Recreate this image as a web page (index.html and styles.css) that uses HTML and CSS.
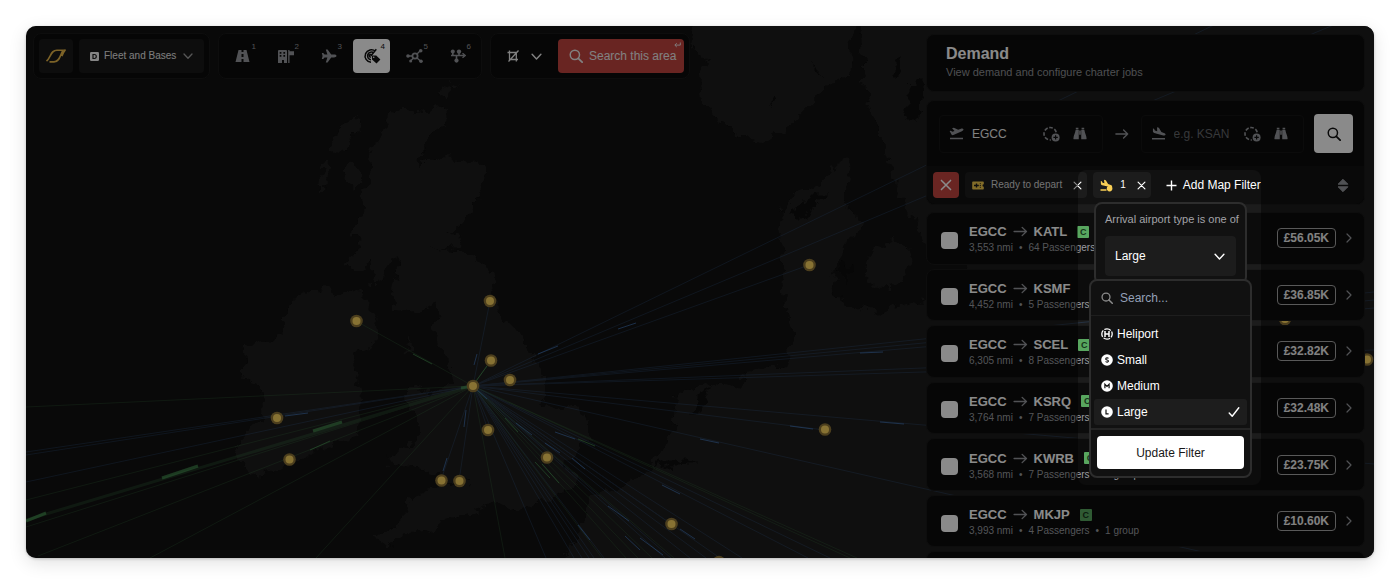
FILE: index.html
```html
<!DOCTYPE html>
<html lang="en">
<head>
<meta charset="utf-8">
<title>Demand</title>
<link rel="stylesheet" href="styles.css">
</head>
<body>
<svg class="symbols" aria-hidden="true">
  <symbol id="search" viewBox="0 0 16 16"><circle cx="6.7" cy="6.7" r="5.3" fill="none" stroke="currentColor" stroke-width="1.7"/><path d="M10.6 10.6 15 15" stroke="currentColor" stroke-width="2" stroke-linecap="round"/></symbol>
  <symbol id="down" viewBox="0 0 10 10"><path d="m1 3 4 4.2L9 3" fill="none" stroke="currentColor" stroke-width="1.3" stroke-linecap="round" stroke-linejoin="round"/></symbol>
  <symbol id="right" viewBox="0 0 10 10"><path d="m3 1 4 4-4 4" fill="none" stroke="currentColor" stroke-width="1.2" stroke-linecap="round" stroke-linejoin="round"/></symbol>
  <symbol id="close" viewBox="0 0 10 10"><path d="m1.2 1.2 7.6 7.6M8.8 1.2 1.2 8.8" stroke="currentColor" stroke-width="1.3" stroke-linecap="round"/></symbol>
  <symbol id="arrow" viewBox="0 0 16 12"><path d="M1 6h13.5M9.8 1.5 14.5 6l-4.7 4.5" fill="none" stroke="currentColor" stroke-width="1.5" stroke-linecap="round" stroke-linejoin="round"/></symbol>
  <symbol id="binoculars" viewBox="0 0 16 14"><path fill="currentColor" d="M3.2.5h3v2h-3zM9.8.5h3v2h-3zM3 3h3.600v10.500H1.200C.6 13.500.4 13 .5 12.300.8 9 2.400 6.500 3 3ZM13 3H9.400v10.500h5.400c.6 0 .8-.5.7-1.200C15.200 9 13.600 6.500 13 3ZM7.100 3.500h1.800v5H7.100z"/></symbol>
  <symbol id="radius" viewBox="0 0 18 16"><path d="M14.200 6.200A6.200 6.200 0 1 0 8.800 13.900" fill="none" stroke="currentColor" stroke-width="1.600" stroke-dasharray="3.600 1.700"/><circle cx="13.600" cy="11.400" r="4" fill="currentColor"/><path d="M13.600 9.200v4.400M11.400 11.400h4.400" stroke="#0d0d0d" stroke-width="1.200"/></symbol>
  <symbol id="depart" viewBox="0 0 16 14"><path fill="currentColor" d="M1 11.500h14v1.800H1zM.6 4.400l1.300-.4 1.700 1.200 2.300-.8L3.200 1.400 5.200.8l4.600 2.200 3-1.100c1.200-.4 2.500-.2 2.700.6.2.8-.6 1.600-1.700 2L4.600 8.700c-.8.3-1.500.2-2-.5z"/></symbol>
  <symbol id="arrive" viewBox="0 0 16 14"><path fill="currentColor" d="M1 11.800h14v1.700H1zM2 1.500l1.200.4.900 1.900 2.500.8L6.400.3 8.400.8l2.700 4.600 2.700 1c1.200.4 2 1.200 1.800 2-.2.8-1.300 1-2.500.7L3.400 6.400C2.400 6.100 2 5.500 2 4.700z"/></symbol>
</svg>

<main class="window">
  <svg class="map" viewBox="26 26 1348 532" preserveAspectRatio="xMidYMid slice" aria-hidden="true">
    <defs>
      <filter id="coast" x="0" y="0" width="100%" height="100%"><feTurbulence type="fractalNoise" baseFrequency=".09" numOctaves="3" seed="4"/><feDisplacementMap in="SourceGraphic" scale="16" xChannelSelector="R" yChannelSelector="G"/></filter>
    </defs>
    <g filter="url(#coast)">
      <path class="land" d="M392 109 410 112 449 107 448 121 430 134 424 152 416 166 440 158 480 160 487 172 478 195 473 210 460 224 448 233 463 237 455 247 430 250 460 251 480 258 490 272 494 295 500 318 517 330 530 350 545 375 547 395 540 405 552 408 575 405 588 420 588 435 578 450 562 465 578 475 577 485 560 495 535 503 510 509 490 505 470 513 440 520 434 533 415 528 400 540 385 545 375 540 398 523 405 515 410 498 430 488 450 480 470 485 462 478 445 478 425 470 405 462 388 468 390 455 415 440 420 425 405 400 410 385 430 392 450 385 452 365 440 345 433 325 440 305 420 312 395 310 392 295 400 275 398 255 388 260 380 285 372 285 375 262 355 270 350 265 362 240 352 232 365 215 360 195 372 180 370 155 385 125Z"/>
      <path class="land" d="M357 115 355 135 342 152 330 150 334 133ZM320 165 328 162 325 190 321 190ZM343 172 353 160 360 180 354 190ZM345 265 360 248 357 270ZM405 352 411 337 412 348ZM440 90 448 86 447 98ZM448 82 460 84 450 88ZM325 287 335 295 355 290 366 300 372 312 380 335 370 348 350 352 355 370 362 400 358 435 330 445 300 460 275 470 250 475 235 450 250 430 262 420 265 400 260 385 243 380 245 360 243 345 270 340 285 330 282 320 292 302 305 295Z"/>
      <path class="land" d="M690 10 692 50 710 62 700 75 703 100 725 125 745 140 763 142 790 125 820 95 848 75 852 30 860 22 866 90 875 120 885 150 897 190 910 215 922 235 928 260 1400 260 1400 10Z"/>
      <path class="land" d="M850 158 851 175 843 205 861 222 856 240 845 242 838 265 830 290 850 305 880 312 935 296 1000 240 1400 240V590H540L578 540 582 515 590 500 625 485 645 472 665 450 675 425 678 395 705 382 740 388 745 372 785 366 795 340 785 300 780 240 782 210 795 192 820 187 832 167ZM870 250 895 240 912 255 905 285 880 290 865 275Z"/>
      <path class="water" d="M795 208 812 196 830 194 812 204 808 222 790 214ZM700 392 712 384 702 412 690 414ZM650 468 672 458 700 462 670 466ZM910 85 925 78 920 118 906 122ZM892 60 902 58 896 82ZM770 93 775 98 771 108ZM813 65 822 76 815 72ZM840 268 852 260 848 285Z"/>
    </g>
    <g class="route blue">
      <path d="M473 386 1374-53M473 386 1374 8M473 386 809 265M473 386 1374 292M473 386 1374 300M473 386 1374 308M473 386 1374 350M473 386 1374 358M473 386 1374 464M473 386 825 430M473 386 1374 591M473 386 490 301M473 386 441 480M473 386 459 481M473 386 488 430M473 386 26 452M473 386 26 455M473 386 26 482"/>
      <path d="M473 386 830 558M473 386 808 558M473 386 742 558M473 386 720 558M473 386 706 558M473 386 690 558M473 386 671 558M473 386 604 558M473 386 594 558M473 386 589 558M473 386 574 558M473 386 546 558M473 386 671 524M473 386 547 457M473 386 665 558M473 386 582 558"/>
    </g>
    <g class="route green">
      <path d="M473 386 356 321M473 386 491 360M473 386 26 407M473 386 26 500M473 386 26 527M473 386 38 556M473 386 150 558M473 386 316 558M473 386 505 558M473 386 850 558M473 386 857 558M473 386 674 558M473 386 652 558M473 386 638 558M473 386 626 558M473 386 602 558"/>
      <path class="wide" d="M473 386 26 520"/>
    </g>
    <g class="pulse blue">
      <path d="M538 354 558 346M618 329 636 323M474 365 477 354M464 427 466 410M443 471 447 458M285 416 308 413M860 353 883 352M880 422 904 424M790 426 813 429M700 439 719 443M516 423 532 435M545 443 560 453M555 432 575 439M572 458 585 469M608 506 629 521M662 485 680 494M680 529 695 539M625 536 640 550M578 525 590 540M640 538 663 555M476 389 487 399"/>
    </g>
    <g class="pulse green">
      <path d="M413 354 432 364M476 381 487 366M578 439 595 446M535 462 550 478M542 464 559 483M505 418 518 432M310 450 330 441"/>
      <path class="wide" d="M313 431 342 422M162 478 198 466M26 521 46 513M461 388 473 386"/>
    </g>
    <g class="pin-ring"><circle cx="356.500" cy="321" r="6.300"/><circle cx="490" cy="301" r="6.300"/><circle cx="491" cy="360.500" r="6.300"/><circle cx="510" cy="380" r="6.300"/><circle cx="473" cy="386" r="6.300"/><circle cx="277" cy="418" r="6.300"/><circle cx="289.500" cy="459.500" r="6.300"/><circle cx="441.500" cy="480.500" r="6.300"/><circle cx="459.500" cy="481" r="6.300"/><circle cx="488" cy="430" r="6.300"/><circle cx="547" cy="457.500" r="6.300"/><circle cx="671.500" cy="524" r="6.300"/><circle cx="825" cy="429.500" r="6.300"/><circle cx="809.500" cy="265" r="6.300"/><circle cx="719" cy="562" r="6.300"/><circle cx="1285" cy="319" r="6.300"/><circle cx="1367" cy="359.500" r="6.300"/></g>
    <g class="pin"><circle cx="356.500" cy="321" r="4"/><circle cx="490" cy="301" r="4"/><circle cx="491" cy="360.500" r="4"/><circle cx="510" cy="380" r="4"/><circle cx="473" cy="386" r="4"/><circle cx="277" cy="418" r="4"/><circle cx="289.500" cy="459.500" r="4"/><circle cx="441.500" cy="480.500" r="4"/><circle cx="459.500" cy="481" r="4"/><circle cx="488" cy="430" r="4"/><circle cx="547" cy="457.500" r="4"/><circle cx="671.500" cy="524" r="4"/><circle cx="825" cy="429.500" r="4"/><circle cx="809.500" cy="265" r="4"/><circle cx="1285" cy="319" r="4"/><circle cx="1367" cy="359.500" r="4"/></g>
  </svg>

  <div class="layout">
    <nav class="toolbar" aria-label="Map tools">
      <div class="card tools">
        <button class="tool logo" aria-label="Home"><svg width="22" height="16" viewBox="0 0 22 16"><path d="M1.500 13.200C6 9.500 5.500 2.200 12 2.200h6C15.500 6 15 13.900 9 13.900H4.500M20.500 1.600c-1.600 2-2.600 4.200-3.700 6.600" fill="none" stroke="currentColor" stroke-width="1.600"/></svg></button>
        <label class="view-select">
          <svg width="9" height="9" viewBox="0 0 9 9"><rect width="9" height="9" rx="1.200" fill="#f5f5f5"/><path d="M3 2.500h1.400C5.700 2.500 6.300 3.300 6.300 4.500S5.700 6.500 4.400 6.500H3z" fill="none" stroke="#1c1c1c" stroke-width="1.200"/></svg>
          <select aria-label="View"><option>Fleet and Bases</option></select>
          <svg class="soft" width="10" height="10"><use href="#down"/></svg>
        </label>
      </div>
      <div class="card tools">
        <button class="tool mode" aria-label="Routes"><svg width="15" height="14" viewBox="0 0 15 14"><path fill="currentColor" fill-rule="evenodd" d="M3.500 1h3v2h2V1h3l3 12H8.500v-3h-2v3H.500zM6.500 5v3h2V5z"/></svg><sup>1</sup></button>
        <button class="tool mode" aria-label="Bases"><svg width="18" height="15" viewBox="0 0 18 15"><path fill="currentColor" fill-rule="evenodd" d="M2 1h7a1 1 0 0 1 1 1v12H7v-3H5v3H1V2a1 1 0 0 1 1-1Zm.700 2v1.700h1.700V3Zm3.700 0v1.700h1.700V3ZM2.700 6v1.700h1.700V6Zm3.700 0v1.700h1.700V6ZM11.200 1h1.300v1.200H17v4h-4.500V14h-1.300z"/></svg><sup>2</sup></button>
        <button class="tool mode" aria-label="Aircraft"><svg width="16" height="14" viewBox="0 0 16 14"><path fill="currentColor" d="M15.500 7c0 .900-1.300 1.400-2.500 1.400h-2.800L6.600 13.500H4.800l1.600-5.100H3.600l-1.400 1.700H.800L1.600 7 .8 3.900h1.400l1.400 1.700h2.800L4.800.5h1.800l3.600 5.100H13c1.200 0 2.500.5 2.500 1.400Z"/></svg><sup>3</sup></button>
        <button class="tool mode active" aria-label="Demand" aria-pressed="true"><svg width="18" height="16" viewBox="0 0 18 16"><g fill="none" stroke="currentColor" stroke-width="1.500"><path d="M12.500 3.200A6.300 6.300 0 1 0 8 14.300M11 5.200A3.800 3.800 0 1 0 8 11.700M13.300 1.200 7.800 8M8.800 7.300A1.300 1.300 0 1 0 8 9"/></g><path fill="currentColor" d="M9 7.500h4.200l4.200 4.100-3.900 4L9 11.600z"/><circle cx="10.700" cy="9.200" r=".8" fill="#fff"/></svg><sup>4</sup></button>
        <button class="tool mode" aria-label="Network"><svg width="18" height="16" viewBox="0 0 18 16"><path d="M2 8h4.500M11 6l3-3M11 10l3.500 3M5 12.500 7.500 10" stroke="currentColor" stroke-width="1.400"/><circle cx="9" cy="8" r="2.600" fill="none" stroke="currentColor" stroke-width="1.800"/><g fill="currentColor"><circle cx="2" cy="8" r="1.800"/><circle cx="14.700" cy="2.800" r="1.800"/><circle cx="15" cy="13.200" r="1.800"/><circle cx="4.700" cy="13" r="1.500"/></g></svg><sup>5</sup></button>
        <button class="tool mode" aria-label="Connections"><svg width="16" height="14" viewBox="0 0 16 14"><path d="M1 6.500h13M2.800 2.500v4M9 2.500v4M6.500 7v5" stroke="currentColor" stroke-width="1.600"/><path d="m12.500 4.300 2.700 2.200-2.700 2.200" fill="none" stroke="currentColor" stroke-width="1.400"/><g fill="currentColor"><circle cx="2.800" cy="2.600" r="2"/><circle cx="9" cy="2.600" r="2.200"/><circle cx="6.500" cy="11.600" r="2.100"/></g></svg><sup>6</sup></button>
      </div>
      <div class="card tools area-tools">
        <button class="plain" aria-label="Crop area"><svg width="12" height="12" viewBox="0 0 12 12"><path d="M2.500.5v9H11M.5 2.500h8.800v9M1.500 11.500l10-11" fill="none" stroke="currentColor" stroke-width="1.300"/></svg></button>
        <button class="plain" aria-label="Area options"><svg width="11" height="11"><use href="#down"/></svg></button>
        <button class="search-area"><svg width="14" height="14"><use href="#search"/></svg>Search this area<svg class="enter" width="7" height="6" viewBox="0 0 7 6"><path d="M6.300.5v2.600H1M2.800 1.200.8 3.100l2 1.900" fill="none" stroke="currentColor" stroke-width=".9"/></svg></button>
      </div>
    </nav>

    <aside class="panel">
      <header class="card heading"><h1>Demand</h1><p>View demand and configure charter jobs</p></header>
      <section class="card finder" aria-label="Find jobs">
        <form class="route-form">
          <div class="field"><svg width="15" height="13"><use href="#depart"/></svg><input aria-label="From" value="EGCC"><button type="button" class="plain" aria-label="Search radius"><svg width="18" height="16"><use href="#radius"/></svg></button><button type="button" class="plain" aria-label="Find departure"><svg width="14" height="13"><use href="#binoculars"/></svg></button></div>
          <svg class="muted between" width="14" height="12"><use href="#arrow"/></svg>
          <div class="field"><svg width="15" height="13"><use href="#arrive"/></svg><input aria-label="To" placeholder="e.g. KSAN"><button type="button" class="plain" aria-label="Search radius"><svg width="18" height="16"><use href="#radius"/></svg></button><button type="button" class="plain" aria-label="Find arrival"><svg width="14" height="13"><use href="#binoculars"/></svg></button></div>
          <button type="button" class="go" aria-label="Search"><svg width="14" height="14"><use href="#search"/></svg></button>
        </form>
        <div class="filters">
          <button class="clear" aria-label="Clear filters"><svg width="12" height="12"><use href="#close"/></svg></button>
          <div class="chip"><svg width="12" height="9" viewBox="0 0 12 9"><path fill="#f2c94c" d="M1 .5h10a.800.800 0 0 1 .8.8v1.900a1.300 1.300 0 0 0 0 2.600v1.900a.800.800 0 0 1-.8.800H1a.800.800 0 0 1-.8-.8V1.300A.800.800 0 0 1 1 .500Z"/><path d="M2 4.500h4.800M4.500 2.500v4" stroke="#1c1c1c" stroke-width="1.400"/><path d="M8.300 2.200v4.600" stroke="#1c1c1c" stroke-dasharray="1 .8"/></svg><span>Ready to depart</span><button class="plain" aria-label="Remove ready to depart"><svg width="9" height="9"><use href="#close"/></svg></button></div>
          <div class="chip short"><svg width="13" height="13" viewBox="0 0 13 13"><path fill="#f9cf55" d="M.5 10.200h6v1.600H.5zM.8 2l1 .2.8 1.600 1.800.5L4 .8l1.800.4 2.300 3.900 2.600.8c1 .3 1.700 1 1.500 1.600-.1.600-1 .8-2.100.6L2.200 6.200C1.200 5.900.9 5.300.9 4.700z"/><circle cx="9.600" cy="9.600" r="2.800" fill="#f9cf55"/></svg><span>1</span><button class="plain" aria-label="Remove arrival filter"><svg width="9" height="9"><use href="#close"/></svg></button></div>
          <button class="plain add"><svg width="11" height="11" viewBox="0 0 11 11"><path d="M5.500.5v10M.5 5.500h10" stroke="currentColor" stroke-width="1.400"/></svg>Add Map Filter</button>
          <button class="plain sort" aria-label="Sort"><svg width="12" height="15" viewBox="0 0 12 15"><path fill="currentColor" stroke="currentColor" stroke-linejoin="round" d="M6 1.300 10.900 6.200H1.100zM6 13.700 10.900 8.800H1.100z"/></svg></button>
        </div>
      </section>
      <ul class="jobs">
        <li class="card job"><input type="checkbox" aria-label="Select EGCC to KATL"><div class="trip"><strong>EGCC <svg width="15" height="11"><use href="#arrow"/></svg> KATL <b class="tag">C</b></strong><p><span>3,553 nmi</span><i>•</i><span>64 Passengers</span></p></div><span class="price">£56.05K</span><svg class="muted" width="10" height="10"><use href="#right"/></svg></li>
        <li class="card job"><input type="checkbox" aria-label="Select EGCC to KSMF"><div class="trip"><strong>EGCC <svg width="15" height="11"><use href="#arrow"/></svg> KSMF</strong><p><span>4,452 nmi</span><i>•</i><span>5 Passengers</span></p></div><span class="price">£36.85K</span><svg class="muted" width="10" height="10"><use href="#right"/></svg></li>
        <li class="card job"><input type="checkbox" aria-label="Select EGCC to SCEL"><div class="trip"><strong>EGCC <svg width="15" height="11"><use href="#arrow"/></svg> SCEL <b class="tag">C</b></strong><p><span>6,305 nmi</span><i>•</i><span>8 Passengers</span></p></div><span class="price">£32.82K</span><svg class="muted" width="10" height="10"><use href="#right"/></svg></li>
        <li class="card job"><input type="checkbox" aria-label="Select EGCC to KSRQ"><div class="trip"><strong>EGCC <svg width="15" height="11"><use href="#arrow"/></svg> KSRQ <b class="tag">C</b></strong><p><span>3,764 nmi</span><i>•</i><span>7 Passengers</span></p></div><span class="price">£32.48K</span><svg class="muted" width="10" height="10"><use href="#right"/></svg></li>
        <li class="card job"><input type="checkbox" aria-label="Select EGCC to KWRB"><div class="trip"><strong>EGCC <svg width="15" height="11"><use href="#arrow"/></svg> KWRB <b class="tag">C</b></strong><p><span>3,568 nmi</span><i>•</i><span>7 Passengers</span><i>•</i><span>2 groups</span></p></div><span class="price">£23.75K</span><svg class="muted" width="10" height="10"><use href="#right"/></svg></li>
        <li class="card job"><input type="checkbox" aria-label="Select EGCC to MKJP"><div class="trip"><strong>EGCC <svg width="15" height="11"><use href="#arrow"/></svg> MKJP <b class="tag">C</b></strong><p><span>3,993 nmi</span><i>•</i><span>4 Passengers</span><i>•</i><span>1 group</span></p></div><span class="price">£10.60K</span><svg class="muted" width="10" height="10"><use href="#right"/></svg></li>
        <li class="card job"></li>
      </ul>
    </aside>
  </div>

  <div class="spotlight"></div>

  <section class="popover condition">
    <label for="kind">Arrival airport type is one of</label>
    <div class="kind"><select id="kind"><option>Large</option></select><svg width="11" height="11"><use href="#down"/></svg></div>
  </section>

  <section class="popover menu">
    <div class="menu-search"><svg width="12" height="12"><use href="#search"/></svg><input aria-label="Search airport types" placeholder="Search..."></div>
    <ul class="options" role="listbox" aria-label="Airport type">
      <li role="option"><svg width="12" height="12" viewBox="0 0 12 12"><circle cx="6" cy="6" r="5.200" fill="none" stroke="#fff" stroke-width="1.300" stroke-dasharray="6.900 1.270" stroke-dashoffset="3.400"/><path d="M4 3v6M8 3v6M4 6h4" stroke="#fff" stroke-width="1.500"/></svg>Heliport</li>
      <li role="option"><svg width="12" height="12" viewBox="0 0 12 12"><circle cx="6" cy="6" r="5.800" fill="#fff"/><path d="M7.500 4.400C6.800 3.600 4.700 3.700 4.700 4.900c0 1.300 2.800.9 2.800 2.200 0 1.200-2.200 1.300-3 .4" fill="none" stroke="#111" stroke-width="1.100"/></svg>Small</li>
      <li role="option"><svg width="12" height="12" viewBox="0 0 12 12"><circle cx="6" cy="6" r="5.800" fill="#fff"/><path d="M3.900 8.200V4.300L6 6.500l2.100-2.200v3.900" fill="none" stroke="#111" stroke-width="1.200"/></svg>Medium</li>
      <li role="option" aria-selected="true"><svg width="12" height="12" viewBox="0 0 12 12"><circle cx="6" cy="6" r="5.800" fill="#fff"/><path d="M5 3.600v4.200h2.600" fill="none" stroke="#111" stroke-width="1.200"/></svg>Large<svg class="check" width="12" height="12" viewBox="0 0 12 12"><path d="m1.200 7 3 3.300L10.800 1.800" fill="none" stroke="#fff" stroke-width="1.400" stroke-linecap="round" stroke-linejoin="round"/></svg></li>
    </ul>
    <div class="menu-footer"><button>Update Filter</button></div>
  </section>
</main>
</body>
</html>
```
FILE: styles.css
```css
* { box-sizing: border-box; }

body {
  margin: 0;
  padding: 26px;
  min-height: 100vh;
  display: flex;
  background: #fff;
  color: #fff;
  font: 12px/16px "Liberation Sans", Arial, sans-serif;
}

h1, p, ul { margin: 0; padding: 0; }
ul { list-style: none; }
svg { display: block; flex: none; }
.symbols { position: absolute; width: 0; height: 0; }

button, input, select {
  font: inherit;
  color: inherit;
  border: 0;
  padding: 0;
  margin: 0;
  background: none;
  outline: 0;
}
select { appearance: none; }
button { display: flex; align-items: center; justify-content: center; cursor: pointer; }

.window {
  position: relative;
  flex: 1;
  height: calc(100vh - 52px);
  min-width: 0;
  overflow: hidden;
  border-radius: 10px;
  background: #111;
  box-shadow: 0 5px 18px rgba(0, 0, 0, .12), 0 1px 3px rgba(0, 0, 0, .2);
}

.map { position: absolute; inset: 0; width: 100%; height: 100%; }
.land { fill: #1d1d1d; }
.water { fill: #111; }
.route, .pulse { fill: none; stroke-width: 1; }
.route { opacity: .2; }
.pulse { opacity: .6; }
.blue { stroke: #4b87d6; }
.green { stroke: #4fa65c; }
.wide { stroke-width: 3; }
.pin-ring { fill: #8c7437; }
.pin { fill: #fad35f; }

.layout {
  position: relative;
  display: flex;
  justify-content: space-between;
  align-items: flex-start;
  padding: 7px 9px 0 7px;
}

.card {
  background: #0c0c0c;
  border: 1px solid #191919;
  border-radius: 8px;
}

/* Toolbar */
.toolbar { display: flex; gap: 8px; }
.tools { display: flex; gap: 6px; padding: 5px; }
.tool {
  position: relative;
  height: 34px;
  width: 34px;
  border-radius: 4px;
  color: #96989d;
}
.logo { background: #191919; color: #e5b548; }
.mode { width: 37px; }
.mode sup {
  position: absolute;
  top: 4px;
  right: 5px;
  font-size: 8px;
  line-height: 8px;
}
.mode.active { background: #fff; color: #111; }
.view-select {
  display: flex;
  align-items: center;
  gap: 5px;
  padding: 0 11px;
  border-radius: 4px;
  background: #191919;
  color: #e8e8e8;
  font-size: 10px;
}
.view-select select { width: 74px; }
.soft { color: #a0a0a0; }
.area-tools { padding-left: 16px; gap: 12px; color: #eee; }
.search-area {
  position: relative;
  height: 34px;
  gap: 6px;
  padding: 0 8px 0 11px;
  margin-left: 4px;
  border-radius: 4px;
  background: #c34540;
}
.enter { position: absolute; top: 3px; right: 3px; }

/* Side panel */
.panel { width: 439px; }
.heading { padding: 10px 19px 9px; margin: 1px 0 8px; }
.heading h1 { font-size: 16px; line-height: 18px; }
.heading p { color: #909296; font-size: 11px; line-height: 19px; }
.route-form { display: flex; align-items: center; padding: 13px 11px 13px 12px; }
.field {
  flex: 1;
  min-width: 0;
  height: 38px;
  display: flex;
  align-items: center;
  padding: 0 15px 0 9px;
  border: 1px solid #151515;
  border-radius: 4px;
  color: #96989d;
}
.field input { flex: 1; min-width: 0; margin: 0 0 0 8px; color: #eee; }
.field input::placeholder { color: #66686c; opacity: 1; }
.field button + button { margin-left: 13px; }
.between { margin: 0 12px; }
.muted { color: #96989d; }
.go {
  width: 39px;
  height: 39px;
  margin-left: 10px;
  border-radius: 4px;
  background: #fff;
  color: #111;
}
.filters {
  display: flex;
  align-items: center;
  gap: 6px;
  padding: 6px;
  border-radius: 0 0 8px 8px;
  background: #111;
}
.clear { width: 26px; height: 26px; border-radius: 4px; background: #c34540; }
.chip {
  display: flex;
  align-items: center;
  gap: 7px;
  height: 26px;
  padding: 0 5px 0 7px;
  border-radius: 4px;
  background: #1c1c1c;
  color: #d4d4d4;
  font-size: 10px;
}
.chip button { margin-left: 4px; color: #fff; }
.short { color: #fff; }
.add { gap: 6px; margin-left: 9px; }
.sort { margin: 0 9px 0 auto; color: #96989d; }

.jobs {
  display: grid;
  grid-template-rows: repeat(7, 1fr);
  gap: 4px;
  min-height: 392px;
  margin-top: 7px;
}
.job { display: flex; align-items: center; padding: 0 10px 0 14px; }
.job input {
  appearance: none;
  width: 17px;
  height: 17px;
  margin: 4px 11px 0 0;
  border-radius: 4px;
  background: #fff;
}
.trip { flex: 1; padding-top: 3px; }
.trip strong {
  display: flex;
  align-items: center;
  gap: 6px;
  font-size: 13px;
  line-height: 15px;
}
.trip strong svg { color: #96989d; }
.tag {
  width: 12px;
  height: 12px;
  margin-left: 4px;
  border-radius: 1px;
  background: #58a65f;
  color: #14331a;
  font-size: 9px;
  line-height: 12px;
  text-align: center;
}
.trip p {
  display: flex;
  gap: 6px;
  margin-top: 2px;
  color: #9a9ca1;
  font-size: 10px;
  line-height: 14px;
}
.trip i { font-style: normal; }
.price {
  padding: 1px 6px;
  margin: 0 8px 0 0;
  border: 1px solid #a5a5a5;
  border-radius: 4px;
  color: #eee;
  font-weight: bold;
}

/* Everything outside the spotlight is dimmed */
.spotlight {
  position: absolute;
  top: 144px;
  right: 113px;
  width: 183px;
  height: 315px;
  border-radius: 8px;
  box-shadow: 0 0 0 2000px rgba(0, 0, 0, .46);
}

/* Popovers */
.popover {
  position: absolute;
  border: 2px solid #2d2d2d;
  border-radius: 8px;
  background: #111;
}
.condition { top: 176px; right: 127px; width: 153px; padding: 7px 9px; }
.condition label {
  display: block;
  margin-bottom: 8px;
  color: #a3a3a8;
  font-size: 11px;
  line-height: 17px;
  white-space: nowrap;
}
.kind {
  display: flex;
  align-items: center;
  height: 40px;
  padding: 0 11px 0 10px;
  border-radius: 4px;
  background: #1c1c1c;
}
.kind select { flex: 1; }
.menu { top: 253px; right: 122px; width: 163px; }
.menu-search {
  display: flex;
  align-items: center;
  gap: 7px;
  height: 35px;
  padding: 0 10px;
  border-bottom: 1px solid #1e1e1e;
  color: #8c8c8c;
}
.menu-search input { min-width: 0; flex: 1; }
.menu-search input::placeholder { color: #94a0b8; opacity: 1; }
.options { padding: 5px 3px 3px; border-bottom: 2px solid #242424; }
.options li {
  display: flex;
  align-items: center;
  gap: 4px;
  height: 26px;
  padding: 0 7px;
  border-radius: 3px;
}
.options [aria-selected="true"] { background: #1d1d1d; }
.check { margin-left: auto; }
.menu-footer { padding: 6px 6px 7px; }
.menu-footer button {
  width: 100%;
  height: 33px;
  border-radius: 4px;
  background: #fff;
  color: #171717;
}
```
